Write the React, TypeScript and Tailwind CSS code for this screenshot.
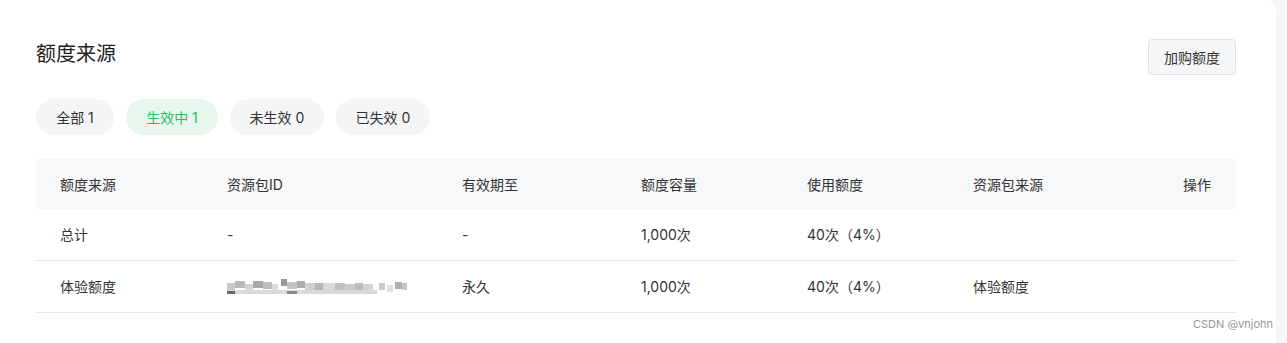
import React from 'react';

const FONT = { fontFamily: '"Inter", "Noto Sans CJK SC", sans-serif' };

const tabs = [
  { label: '全部 1', active: false, w: 'w-[78px]' },
  { label: '生效中 1', active: true, w: 'w-[92px]' },
  { label: '未生效 0', active: false, w: 'w-[94px]' },
  { label: '已失效 0', active: false, w: 'w-[94px]' },
];

// pixelated (masked) id
const BlurredId: React.FC = () => {
  const blocks = [
    [0, 4, 8, '#c8c8c8'], [8, 2, 10, '#b8b8b8'], [18, 5, 8, '#d4d4d4'], [26, 2, 10, '#a8a8a8'],
    [36, 3, 9, '#bdbdbd'], [45, 5, 6, '#dadada'], [54, 0, 6, '#9a9a9a'], [60, 3, 10, '#c4c4c4'],
    [70, 2, 8, '#adadad'], [78, 4, 10, '#cfcfcf'], [88, 4, 8, '#b5b5b5'], [96, 4, 12, '#d8d8d8'],
    [108, 4, 10, '#c0c0c0'], [118, 5, 10, '#cbcbcb'], [128, 4, 8, '#bcbcbc'], [136, 5, 10, '#d2d2d2'],
    [152, 4, 6, '#c9c9c9'], [160, 6, 6, '#e0e0e0'], [168, 3, 7, '#b0b0b0'], [175, 4, 5, '#c6c6c6'],
  ] as const;
  return (
    <svg width="182" height="16" viewBox="0 0 182 16">
      {blocks.map(([x, y, w, c], i) => (
        <rect key={i} x={x} y={y} width={w} height={7} fill={c} />
      ))}
      <rect x="0" y="11" width="150" height="4" fill="#d9d9d9" />
      <rect x="0" y="12" width="8" height="3" fill="#666" />
      <rect x="60" y="12" width="10" height="3" fill="#888" />
    </svg>
  );
};

const cols = ['w-[167px]', 'w-[235px]', 'w-[179px]', 'w-[166px]', 'w-[166px]', 'flex-1', 'w-[100px]'];

const App: React.FC = () => {
  const header = ['额度来源', '资源包ID', '有效期至', '额度容量', '使用额度', '资源包来源', '操作'];
  const rows: React.ReactNode[][] = [
    ['总计', '-', '-', '1,000次', '40次（4%）', '', ''],
    ['体验额度', <BlurredId key="id" />, '永久', '1,000次', '40次（4%）', '体验额度', ''],
  ];

  return (
    <div className="flex h-[343px] w-[1287px] bg-[#f5f6f8] text-[#333]" style={FONT}>
      <div className="relative flex-1 rounded-tr-[10px] bg-white pl-9 pr-[40px] pt-[39px]">
        {/* Header */}
        <div className="flex items-start justify-between">
          <h1 className="mt-[1px] text-[20px] font-normal leading-[28px] text-[#222]">额度来源</h1>
          <button className="h-[36px] w-[88px] rounded-[4px] border border-[#dfe1e5] bg-[#f5f6f7] text-[14px] text-[#333]">
            加购额度
          </button>
        </div>

        {/* Tabs */}
        <div className="mt-[24px] flex gap-3">
          {tabs.map((t) => (
            <div
              key={t.label}
              className={`flex h-[36px] items-center justify-center rounded-full text-[14px] ${t.w} ${
                t.active ? 'bg-[#e7f7ed] text-[#2dbb62]' : 'bg-[#f4f5f7] text-[#333]'
              }`}
            >
              {t.label}
            </div>
          ))}
        </div>

        {/* Table */}
        <div className="mt-[24px] w-[1200px] text-[14px]">
          <div className="flex h-[50px] items-center bg-[#f7f8fa]">
            {header.map((h, i) => (
              <div key={h} className={`${cols[i]} ${i === 6 ? 'pr-[25px] text-right' : 'pl-6'}`}>
                {h}
              </div>
            ))}
          </div>
          {rows.map((r, ri) => (
            <div key={ri} className="flex h-[52px] items-center border-b border-[#e6e6e6]">
              {r.map((c, i) => (
                <div key={i} className={`${cols[i]} ${i === 6 ? 'pr-[25px] text-right' : 'pl-6'}`}>
                  {c}
                </div>
              ))}
            </div>
          ))}
        </div>

        <div className="absolute bottom-[11px] right-[3px] text-[11px] text-[#999]">CSDN @vnjohn</div>
      </div>
      <div className="w-[11px]" />
    </div>
  );
};

export default App;
